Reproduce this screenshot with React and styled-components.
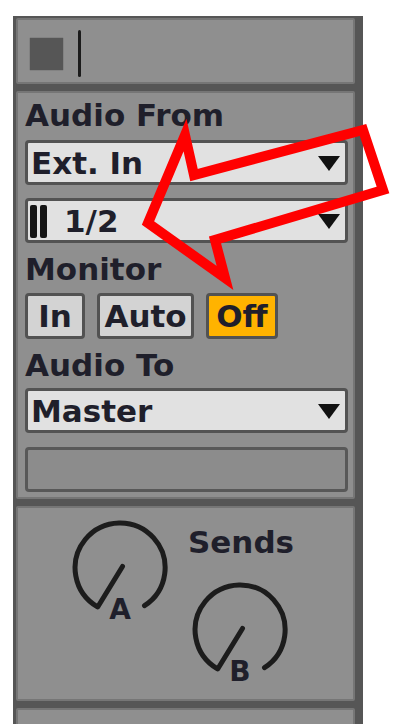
import React from "react";
import styled, { createGlobalStyle } from "styled-components";

const GlobalStyle = createGlobalStyle`
  html, body {
    margin: 0;
    padding: 0;
    background: #ffffff;
    overflow: hidden;
  }
  body {
    font-family: "DejaVu Sans", "Liberation Sans", sans-serif;
  }
`;

const Page = styled.div`
  position: relative;
  width: 400px;
  height: 724px;
  overflow: hidden;
  background: #ffffff;
`;

const Strip = styled.div`
  margin: 16px 0 0 13px;
  width: 350px;
  box-sizing: border-box;
  background: #565656;
  padding: 2px 8px 0 3px;
  display: flex;
  flex-direction: column;
  gap: 7px;
`;

const Section = styled.div`
  box-sizing: border-box;
  flex: none;
  height: ${(p) => p.$h}px;
  background: #8f8f8f;
  border: 2px solid #767676;
  border-radius: 2px;
`;

const TopSection = styled(Section)`
  display: flex;
  align-items: center;
  gap: 15px;
  padding: 5px 0 0 12px;
`;

const Swatch = styled.div`
  width: 33px;
  height: 32px;
  background: #565656;
  box-shadow: 0 0 1px #4a4a4a;
`;

const Cursor = styled.div`
  width: 3px;
  height: 47px;
  border-radius: 2px;
  background: #1b1b1b;
`;

const IoSection = styled(Section)`
  display: flex;
  flex-direction: column;
  padding: 0 5px 0 7px;
`;

const Label = styled.div`
  margin-top: ${(p) => p.$mt}px;
  height: 36px;
  font-size: 31px;
  line-height: 36px;
  font-weight: 700;
  color: #1f1f2b;
  white-space: nowrap;
`;

const Dropdown = styled.div`
  margin-top: ${(p) => p.$mt}px;
  box-sizing: border-box;
  height: 45px;
  display: flex;
  align-items: center;
  padding: 1px 5px 0 3px;
  background: #e1e1e1;
  border: 3px solid #535353;
  border-radius: 4px;
  font-size: 31px;
  font-weight: 700;
  color: #1f1f2b;
`;

const DropText = styled.span`
  flex: 1;
  line-height: 39px;
  white-space: nowrap;
`;

const Bars = styled.span`
  display: flex;
  gap: 3px;
  margin: 0 17px 0 -1px;
`;

const Bar = styled.span`
  width: 7px;
  height: 33px;
  border-radius: 2px;
  background: #141414;
`;

const Arrow = styled.svg`
  flex: none;
  width: 22px;
  height: 15px;
`;

const ButtonRow = styled.div`
  margin-top: ${(p) => p.$mt}px;
  display: flex;
  gap: 12px;
`;

const MonitorButton = styled.div`
  box-sizing: border-box;
  width: ${(p) => p.$w}px;
  height: 46px;
  display: flex;
  align-items: center;
  justify-content: center;
  background: ${(p) => (p.$on ? "#ffb300" : "#d3d3d3")};
  border: 3px solid #525252;
  border-radius: 4px;
  font-size: 31px;
  font-weight: 700;
  color: #1f1f2b;
`;

const EmptySlot = styled.div`
  margin-top: ${(p) => p.$mt}px;
  box-sizing: border-box;
  height: 45px;
  background: #8c8c8c;
  border: 3px solid #585858;
  border-radius: 4px;
`;

const SendsSection = styled(Section)`
  display: flex;
  padding: 10px 0 0 52px;
`;

const SendsColumn = styled.div`
  display: flex;
  flex-direction: column;
  margin-left: 18px;
  padding-top: 6px;
`;

const SendsTitle = styled.div`
  height: 36px;
  font-size: 31px;
  line-height: 36px;
  font-weight: 700;
  color: #1f1f2b;
`;

const KnobWrap = styled.div`
  display: flex;
  flex-direction: column;
  align-items: center;
  width: 100px;
  margin: ${(p) => p.$m || "0"};
`;

const KnobLabel = styled.span`
  margin-top: -26px;
  height: 36px;
  font-size: 28px;
  line-height: 36px;
  font-weight: 700;
  color: #1f1f2b;
`;

const Overlay = styled.svg`
  position: absolute;
  left: 0;
  top: 0;
  width: 400px;
  height: 724px;
  pointer-events: none;
`;

function DropArrow() {
  return (
    <Arrow viewBox="0 0 22 15">
      <polygon points="0,0 22,0 11,15" fill="#111111" />
    </Arrow>
  );
}

function Knob({ label, m }) {
  return (
    <KnobWrap $m={m}>
      <svg width="100" height="100" viewBox="0 0 100 100">
        <path
          d="M27.5 88.8 A45 45 0 1 1 74.5 87.7"
          fill="none"
          stroke="#1c1c1c"
          strokeWidth="5"
          strokeLinecap="round"
        />
        <line
          x1="52.5"
          y1="48.5"
          x2="28"
          y2="88.5"
          stroke="#1c1c1c"
          strokeWidth="5"
          strokeLinecap="round"
        />
      </svg>
      <KnobLabel>{label}</KnobLabel>
    </KnobWrap>
  );
}

export default function App() {
  return (
    <Page>
      <GlobalStyle />
      <Strip>
        <TopSection $h={66}>
          <Swatch />
          <Cursor />
        </TopSection>

        <IoSection $h={408}>
          <Label $mt={4}>Audio From</Label>
          <Dropdown $mt={7}>
            <DropText>Ext. In</DropText>
            <DropArrow />
          </Dropdown>
          <Dropdown $mt={13}>
            <Bars>
              <Bar />
              <Bar />
            </Bars>
            <DropText>1/2</DropText>
            <DropArrow />
          </Dropdown>
          <Label $mt={8}>Monitor</Label>
          <ButtonRow $mt={6}>
            <MonitorButton $w={60}>In</MonitorButton>
            <MonitorButton $w={97}>Auto</MonitorButton>
            <MonitorButton $w={72} $on>
              Off
            </MonitorButton>
          </ButtonRow>
          <Label $mt={8}>Audio To</Label>
          <Dropdown $mt={5}>
            <DropText>Master</DropText>
            <DropArrow />
          </Dropdown>
          <EmptySlot $mt={14} />
        </IoSection>

        <SendsSection $h={195}>
          <Knob label="A" />
          <SendsColumn>
            <SendsTitle>Sends</SendsTitle>
            <Knob label="B" m="20px 0 0 2px" />
          </SendsColumn>
        </SendsSection>

        <Section $h={60} />
      </Strip>

      <Overlay viewBox="0 0 400 724">
        <polygon
          points="185,135 194,175 363,130 383,190 215,240 225,278 148,223"
          fill="none"
          stroke="#ff0000"
          strokeWidth="10"
          strokeLinejoin="miter"
          strokeMiterlimit="10"
        />
      </Overlay>
    </Page>
  );
}
